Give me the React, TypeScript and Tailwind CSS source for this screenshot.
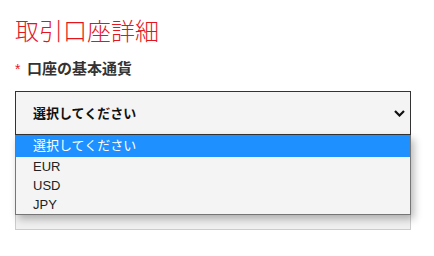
import React from "react";

export default function App() {
  const options = ["EUR", "USD", "JPY"];
  return (
    <div
      className="w-[434px] h-[256px] bg-white overflow-hidden pl-[15px] pt-[15px]"
      style={{ fontFamily: '"Liberation Sans", "Noto Sans CJK JP", sans-serif' }}
    >
      <h1 className="h-[33px] leading-[33px] text-[24px] font-light text-[#e3161e]">
        取引口座詳細
      </h1>
      <div className="mt-[11px] h-[20px] leading-[20px] flex items-center text-[15px] font-bold text-[#333333]">
        <span className="text-[#e3161e] text-[14px] font-normal w-[12px]">*</span>
        <span>口座の基本通貨</span>
      </div>
      <div className="relative mt-[12px] w-[396px]">
        <div className="h-[44px] border border-[#333333] bg-[#f4f4f4] flex items-center justify-between pl-[17px] pr-[4px]">
          <span className="text-[13px] font-semibold text-[#111111] leading-none">選択してください</span>
          <svg width="11" height="7" viewBox="0 0 11 7" className="mr-[1px]">
            <path d="M1 1 L5.5 5.5 L10 1" fill="none" stroke="#111" strokeWidth="2.2" />
          </svg>
        </div>
        <div className="h-[95px] border border-t-0 border-[#cccccc] bg-[#f0f0f0]" />
        <div className="absolute left-0 top-[44px] w-[396px] h-[80px] bg-[#f4f4f4] border-x border-b border-[#767676] shadow-[3px_4px_8px_rgba(0,0,0,0.28)] text-[13px]">
          <div className="h-[22px] bg-[#1e90ff] text-white flex items-center pl-[17px]">選択してください</div>
          {options.map((o) => (
            <div key={o} className="h-[19px] flex items-center pl-[17px] text-[#222222]">
              {o}
            </div>
          ))}
        </div>
      </div>
    </div>
  );
}
